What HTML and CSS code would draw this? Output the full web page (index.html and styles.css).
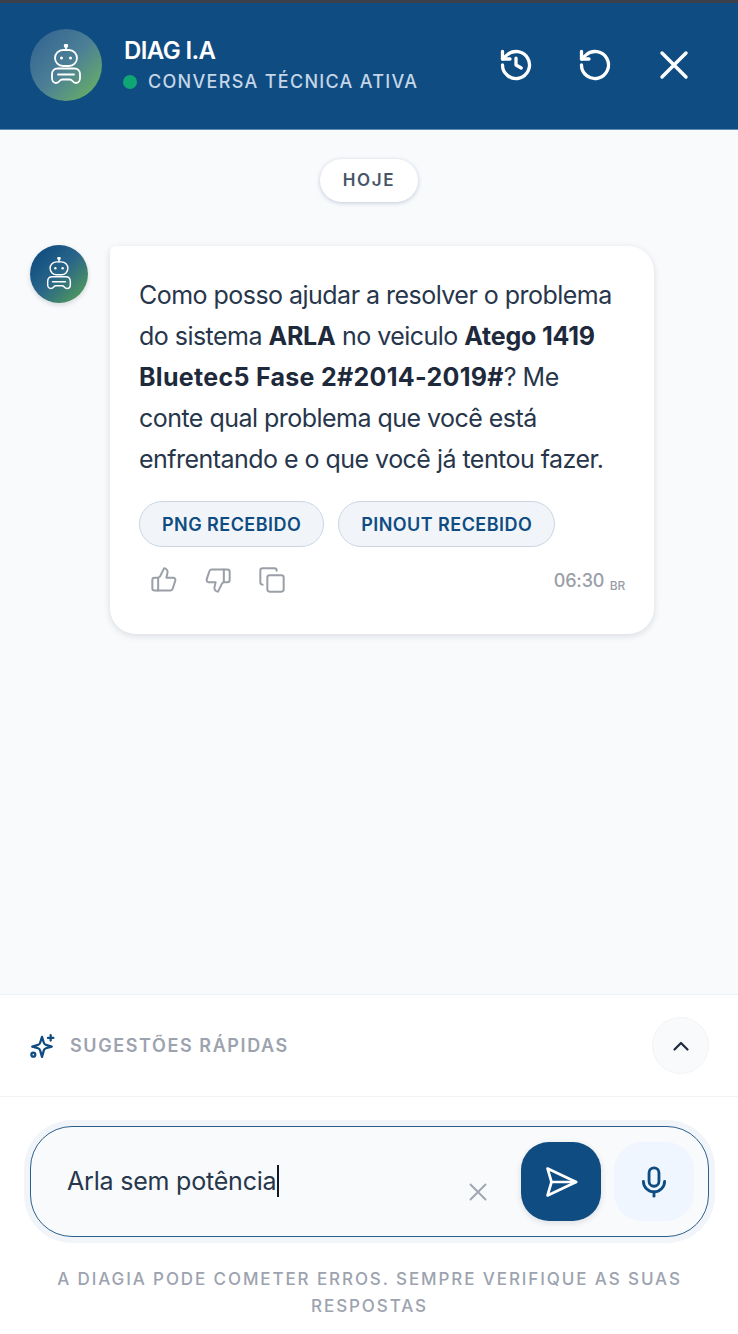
FILE: index.html
```html
<!DOCTYPE html>
<html lang="pt-BR">

<head>
    <meta charset="UTF-8">
    <meta name="viewport" content="width=device-width, initial-scale=1.0">
    <title>Diag I.A</title>
    <link rel="stylesheet" href="styles.css">
</head>

<body>
    <svg width="0" height="0" class="defs">
        <symbol id="robot" viewBox="0 0 32 42" fill="none" stroke="currentColor" stroke-width="1.800" stroke-linecap="round" stroke-linejoin="round">
            <path d="M16 2v4"/>
            <circle cx="16" cy="1.800" r="1.300" fill="currentColor"/>
            <rect x="5" y="6" width="22" height="16" rx="8"/>
            <circle cx="11.500" cy="14" r="1.500" fill="currentColor" stroke="none"/>
            <circle cx="20.500" cy="14" r="1.500" fill="currentColor" stroke="none"/>
            <path d="M7.500 24.500h17c3.300 0 5.500 2.500 5.500 6v3.500c0 2.800-1.500 5-3.800 5-1.800 0-3-1-4-2.300-.6-.8-1.300-1.200-2.500-1.200h-7.400c-1.200 0-1.900.4-2.500 1.200-1 1.300-2.200 2.300-4 2.300C3.500 39 2 36.800 2 34v-3.500c0-3.500 2.200-6 5.500-6z"/>
            <path d="M8 30.500h16"/>
        </symbol>
    </svg>

    <div class="status-line"></div>

    <header class="top-bar">
        <div class="avatar avatar-large">
            <svg class="robot-large"><use href="#robot"/></svg>
        </div>
        <div class="top-title">
            <div class="name">DIAG I.A</div>
            <div class="state"><span class="dot"></span>CONVERSA TÉCNICA ATIVA</div>
        </div>
        <div class="top-actions">
            <svg width="36" height="36" viewBox="0 0 24 24" fill="none" stroke="currentColor" stroke-width="2.200" stroke-linecap="round" stroke-linejoin="round">
                <path d="M3 12a9 9 0 1 0 2.900-6.600L3 8"/>
                <path d="M3 3v5h5"/>
                <path d="M12 7.500V12l3.500 2"/>
            </svg>
            <svg width="36" height="36" viewBox="0 0 24 24" fill="none" stroke="currentColor" stroke-width="2.200" stroke-linecap="round" stroke-linejoin="round">
                <path d="M3 12a9 9 0 1 0 2.900-6.600L3 8"/>
                <path d="M3 3v5h5"/>
            </svg>
            <svg width="36" height="36" viewBox="0 0 24 24" fill="none" stroke="currentColor" stroke-width="2.300" stroke-linecap="round">
                <path d="M4 4l16 16M20 4L4 20"/>
            </svg>
        </div>
    </header>

    <main class="chat">
        <div class="day-row"><span class="day-pill">HOJE</span></div>
        <div class="message">
            <div class="avatar avatar-small">
                <svg class="robot-small"><use href="#robot"/></svg>
            </div>
            <div class="bubble">
                <p>Como posso ajudar a resolver o problema do sistema <b>ARLA</b> no veiculo <b>Atego 1419</b> <b class="wide">Bluetec5 Fase 2#2014-2019#</b>? Me conte qual problema que você está enfrentando e o que você já tentou fazer.</p>
                <div class="chips">
                    <span class="chip">PNG RECEBIDO</span>
                    <span class="chip">PINOUT RECEBIDO</span>
                </div>
                <div class="bubble-foot">
                    <div class="feedback">
                        <svg width="28" height="28" viewBox="0 0 24 24" fill="none" stroke="currentColor" stroke-width="1.700" stroke-linecap="round" stroke-linejoin="round">
                            <path d="M7 10v11"/>
                            <path d="M15 5.900 14 10h5.800a2 2 0 0 1 1.900 2.500l-2.300 7A2 2 0 0 1 17.500 21H4a2 2 0 0 1-2-2v-7a2 2 0 0 1 2-2h2.800a2 2 0 0 0 1.800-1.100L12 2a3.100 3.100 0 0 1 3 3.900z"/>
                        </svg>
                        <svg width="28" height="28" viewBox="0 0 24 24" fill="none" stroke="currentColor" stroke-width="1.700" stroke-linecap="round" stroke-linejoin="round">
                            <path d="M17 14V3"/>
                            <path d="M9 18.100 10 14H4.200a2 2 0 0 1-1.900-2.500l2.300-7A2 2 0 0 1 6.500 3H20a2 2 0 0 1 2 2v7a2 2 0 0 1-2 2h-2.800a2 2 0 0 0-1.800 1.100L12 22a3.100 3.100 0 0 1-3-3.900z"/>
                        </svg>
                        <svg width="28" height="28" viewBox="0 0 24 24" fill="none" stroke="currentColor" stroke-width="1.700" stroke-linecap="round" stroke-linejoin="round">
                            <rect x="8" y="8" width="14" height="14" rx="2"/>
                            <path d="M4 16c-1.100 0-2-.9-2-2V4c0-1.100.9-2 2-2h10c1.100 0 2 .9 2 2"/>
                        </svg>
                    </div>
                    <div class="time">06:30 <small>BR</small></div>
                </div>
            </div>
        </div>
    </main>

    <section class="suggestions">
        <div class="suggestions-label">
            <svg width="26" height="26" viewBox="0 0 24 24" fill="none" stroke="currentColor" stroke-width="2.100" stroke-linecap="round" stroke-linejoin="round">
                <path d="M12 3.500 13.700 9a3 3 0 0 0 2 2l5.300 1.500-5.300 1.600a3 3 0 0 0-2 2L12 22l-1.700-5.900a3 3 0 0 0-2-2L3 12.500 8.300 11a3 3 0 0 0 2-2z"/>
                <path d="M20 2v5M17.500 4.500h5"/>
                <circle cx="4" cy="20" r="1.800"/>
            </svg>
            <span>SUGESTÕES RÁPIDAS</span>
        </div>
        <button class="collapse">
            <svg width="24" height="24" viewBox="0 0 24 24" fill="none" stroke="currentColor" stroke-width="2.200" stroke-linecap="round" stroke-linejoin="round">
                <path d="M5.500 15.500 12 9l6.500 6.500"/>
            </svg>
        </button>
    </section>

    <footer class="composer">
        <div class="input-box">
            <div class="input-text">Arla sem potência<span class="caret"></span></div>
            <svg class="clear" width="24" height="24" viewBox="0 0 24 24" fill="none" stroke="currentColor" stroke-width="2" stroke-linecap="round">
                <path d="M4.500 4.500l15 15M19.500 4.500l-15 15"/>
            </svg>
            <button class="send">
                <svg width="38" height="38" viewBox="0 0 24 24" fill="none" stroke="currentColor" stroke-width="1.700" stroke-linecap="round" stroke-linejoin="round">
                    <path d="M3.500 3.500 21.500 12 3.500 20.500 6 12z"/>
                    <path d="M6 12h15.500"/>
                </svg>
            </button>
            <button class="mic">
                <svg width="34" height="34" viewBox="0 0 24 24" fill="none" stroke="currentColor" stroke-width="2" stroke-linecap="round" stroke-linejoin="round">
                    <rect x="8.500" y="2" width="7" height="13" rx="3.500"/>
                    <path d="M4.500 11.500a7.500 7.500 0 0 0 15 0"/>
                    <path d="M12 19v3"/>
                </svg>
            </button>
        </div>
        <p class="disclaimer">A DIAGIA PODE COMETER ERROS. SEMPRE VERIFIQUE AS SUAS RESPOSTAS</p>
    </footer>
</body>

</html>
```

FILE: styles.css
```css
* {
    box-sizing: border-box;
}

html,
body {
    height: 100%;
}

body {
    font-family: Inter, "Noto Sans", sans-serif;
    margin: 0;
    background-color: #f8fafc;
    color: #1e293b;
    display: flex;
    flex-direction: column;
    overflow: hidden;
}

button {
    border: none;
    padding: 0;
    display: flex;
    align-items: center;
    justify-content: center;
}

.defs {
    position: absolute;
}

.status-line {
    height: 3px;
    background-color: #3c4149;
}

.top-bar {
    height: 127px;
    flex-shrink: 0;
    background-color: #0f4c81;
    border-bottom: 1px solid #5d8fb5;
    padding: 0 46px 2px 30px;
    display: flex;
    align-items: center;
    color: white;
}

.avatar {
    border-radius: 50%;
    color: white;
    display: flex;
    align-items: center;
    justify-content: center;
    flex-shrink: 0;
}

.avatar-large {
    width: 72px;
    height: 72px;
    background: linear-gradient(135deg, #2f6190 0%, #4c7f96 50%, #6db85c 100%);
}

.robot-large {
    width: 32px;
    height: 42px;
}

.avatar-small {
    width: 58px;
    height: 58px;
    margin-top: -1px;
    background: linear-gradient(135deg, #0f4c81 10%, #2a6688 50%, #5aa651 100%);
    box-shadow: 0 2px 5px rgba(15, 23, 42, 0.15);
}

.robot-small {
    width: 26px;
    height: 34px;
}

.top-title {
    margin-left: 22px;
    flex: 1;
}

.name {
    font-size: 24px;
    font-weight: 600;
    letter-spacing: -0.6px;
    line-height: 30px;
}

.state {
    font-size: 18px;
    font-weight: 500;
    letter-spacing: 1.3px;
    line-height: 24px;
    margin-top: 4px;
    color: #c5d6e8;
    display: flex;
    align-items: center;
}

.dot {
    width: 14px;
    height: 14px;
    border-radius: 50%;
    background-color: #10a574;
    margin-right: 11px;
    margin-left: -1px;
}

.top-actions {
    display: flex;
    gap: 43px;
}

.chat {
    flex: 1;
    padding: 29px 30px 0;
}

.day-row {
    display: flex;
    justify-content: center;
}

.day-pill {
    background-color: white;
    border-radius: 22px;
    padding: 11px 23px;
    height: 43px;
    font-size: 17px;
    line-height: 21px;
    font-weight: 600;
    letter-spacing: 1.6px;
    color: #475569;
    box-shadow: 0 1px 4px rgba(30, 64, 120, 0.25);
}

.message {
    display: flex;
    gap: 22px;
    margin-top: 44px;
}

.bubble {
    width: 544px;
    height: 388px;
    background-color: white;
    border-radius: 6px 26px 26px 26px;
    box-shadow: 0 2px 7px rgba(15, 23, 42, 0.13);
    padding: 29px 29px 0;
}

.bubble p {
    margin: 0;
    font-size: 25px;
    line-height: 41px;
    letter-spacing: -0.53px;
    color: #27364b;
}

.bubble b {
    font-weight: 700;
    letter-spacing: -0.2px;
    color: #1e293b;
}

.bubble b.wide {
    letter-spacing: 0.3px;
}

.chips {
    display: flex;
    gap: 14px;
    margin-top: 21px;
}

.chip {
    height: 46px;
    border-radius: 23px;
    border: 1px solid #cbd5e1;
    background-color: #f1f5f9;
    padding: 0 22px;
    font-size: 18px;
    font-weight: 600;
    letter-spacing: 0.45px;
    line-height: 45px;
    color: #0f4c81;
}

.bubble-foot {
    display: flex;
    justify-content: space-between;
    align-items: center;
    margin-top: 19px;
    padding-left: 11px;
}

.feedback {
    display: flex;
    gap: 26px;
    color: #9a9ea6;
}

.time {
    font-size: 18px;
    font-weight: 500;
    letter-spacing: -0.2px;
    color: #9a9ea6;
}

.time small {
    font-size: 12px;
    margin-left: 1px;
    position: relative;
    top: 3px;
}

.suggestions {
    height: 103px;
    flex-shrink: 0;
    background-color: white;
    border-top: 1px solid #eef1f5;
    border-bottom: 1px solid #f1f3f6;
    padding: 0 29px 0 29px;
    display: flex;
    align-items: center;
    justify-content: space-between;
}

.suggestions-label {
    display: flex;
    align-items: center;
    gap: 15px;
    color: #0f4c81;
}

.suggestions-label span {
    font-size: 18px;
    font-weight: 600;
    letter-spacing: 1.6px;
    color: #9ca3af;
}

.collapse {
    width: 57px;
    height: 57px;
    border-radius: 50%;
    background-color: #f8fafc;
    border: 1px solid #f1f3f6;
    color: #1e293b;
}

.composer {
    height: 237px;
    flex-shrink: 0;
    background-color: white;
    padding: 29px 29px 0 30px;
}

.input-box {
    height: 111px;
    border: 1.500px solid #2d5f8d;
    border-radius: 42px;
    background-color: #f8fafc;
    box-shadow: 0 0 0 6px #f1f5f9;
    display: flex;
    align-items: center;
    padding: 0 14px 0 36px;
}

.input-text {
    flex: 1;
    font-size: 25px;
    letter-spacing: -0.2px;
    color: #27364b;
    display: flex;
    align-items: center;
    padding-bottom: 2px;
}

.caret {
    width: 1.500px;
    height: 32px;
    background-color: #111827;
    margin-left: 1px;
}

.clear {
    color: #a0a6b4;
    margin: 21px 31px 0 0;
}

.send {
    width: 80px;
    height: 79px;
    border-radius: 28px;
    background-color: #0f4c81;
    color: white;
    box-shadow: 0 2px 6px rgba(15, 23, 42, 0.12);
}

.mic {
    width: 80px;
    height: 79px;
    border-radius: 28px;
    margin-left: 13px;
    background-color: #eff6ff;
    color: #0f4c81;
}

.disclaimer {
    margin: 29px 10px 0;
    text-align: center;
    font-size: 17px;
    font-weight: 500;
    line-height: 27px;
    letter-spacing: 1.9px;
    color: #9ca3af;
}
```
